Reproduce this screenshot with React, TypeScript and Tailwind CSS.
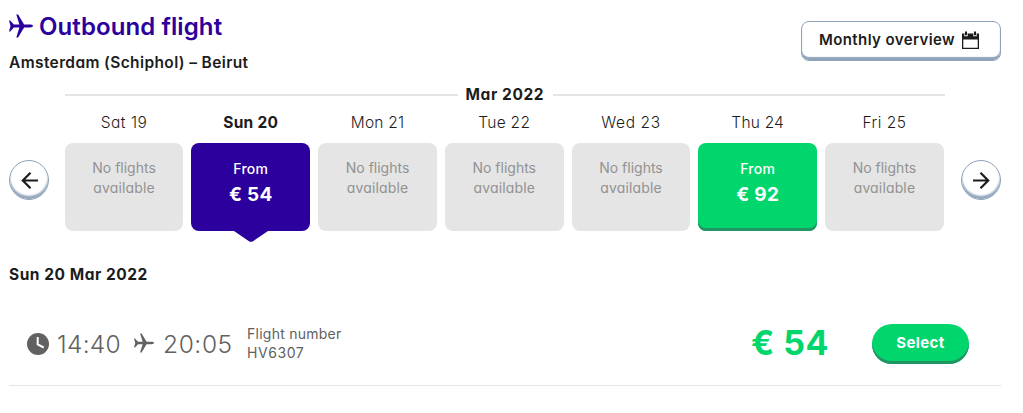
import { clsx } from "clsx";

interface Day {
  label: string;
  price?: number;
  selected?: boolean;
  tracking: string;
}

const days: Day[] = [
  { label: "Sat 19", tracking: "tracking-[0.55px]" },
  { label: "Sun 20", price: 54, selected: true, tracking: "tracking-[0.3px]" },
  { label: "Mon 21", tracking: "tracking-[0.2px]" },
  { label: "Tue 22", tracking: "tracking-[0.3px]" },
  { label: "Wed 23", tracking: "tracking-[0.6px]" },
  { label: "Thu 24", price: 92, tracking: "tracking-[0.2px]" },
  { label: "Fri 25", tracking: "tracking-[0.5px]" },
];

function PlaneIcon({ className }: { className?: string }) {
  return (
    <svg viewBox="0 0 24 24" className={className} fill="currentColor">
      <path d="M0 6.5h1.2l3.6 4 5.6.1L7.3.5h1.8l6 10.1h5.7c1.9 0 3.2.6 3.2 1.4s-1.3 1.4-3.2 1.4h-5.7l-6 10.1H7.3l3.1-10.1-5.6.1-3.6 4H0L1.5 12z" />
    </svg>
  );
}

function CalendarIcon() {
  return (
    <svg viewBox="0 0 17 18" className="h-[18px] w-[17px]" fill="#1c1c1c">
      <path fillRule="evenodd" d="M0 2.5h17V18H0zM1.3 8.5v8.2h14.4V8.5z" />
      <path d="M2.3 2.5h3.4v2.8H2.3zM11.3 2.5h3.4v2.8h-3.4z" fill="#fff" />
      <path d="M3 .5h2v3.8H3zM12 .5h2v3.8h-2z" />
    </svg>
  );
}

function ClockIcon() {
  return (
    <svg viewBox="0 0 22 22" className="mt-[2px] h-[22px] w-[22px]">
      <circle cx="11" cy="11" r="11" fill="#616161" />
      <path d="M10.7 4v7.3l6 3.2" fill="none" stroke="#fff" strokeWidth="2" />
    </svg>
  );
}

function ArrowButton({ direction }: { direction: "left" | "right" }) {
  return (
    <button
      aria-label={direction === "left" ? "Previous days" : "Next days"}
      className="flex h-10 w-10 shrink-0 items-center justify-center rounded-full border border-[#8fa3ba] bg-white shadow-[inset_0_-3px_2px_#8fa3ba]"
    >
      <svg
        viewBox="0 0 17 17"
        className={clsx("h-[17px] w-[17px]", direction === "right" && "rotate-180")}
        fill="none"
        stroke="#1c1c1c"
        strokeWidth="2.2"
      >
        <path d="M9.5.8 1.8 8.5l7.7 7.7M2 8.5h15" />
      </svg>
    </button>
  );
}

function DayCard({ day }: { day: Day }) {
  return (
    <div className="text-center">
      <div
        className={clsx(
          "h-[31px] text-[15.5px] leading-[21px] whitespace-nowrap text-[#1c1c1c]",
          day.selected ? "font-bold" : "font-[350]",
          day.tracking
        )}
      >
        {day.label}
      </div>
      <div
        className={clsx(
          "relative h-[88px] rounded-lg",
          !day.price && "bg-[#e5e5e5] pt-[15px] text-[14px] leading-5 font-normal text-[#929292]",
          day.selected && "bg-[#2b009c] pt-4 text-white",
          day.price && !day.selected && "bg-[#00d66c] pt-4 text-white shadow-[inset_0_-3px_0_#219464]"
        )}
      >
        {day.price ? (
          <>
            <div className="text-[14px] leading-5 font-medium tracking-[0.3px]">From</div>
            <div className="mt-1 text-[19px] leading-6 font-bold tracking-[0.3px]">€ {day.price}</div>
          </>
        ) : (
          <>
            No flights
            <br />
            <span className="tracking-[0.15px]">available</span>
          </>
        )}
        {day.selected && (
          <svg viewBox="0 0 34 12" className="absolute top-[87px] left-1/2 h-3 w-[34px] -translate-x-1/2" fill="#2b009c">
            <path d="M0 0h34v1L19 11.2q-2 1.2-4 0L0 1z" />
          </svg>
        )}
      </div>
    </div>
  );
}

export default function App() {
  return (
    <main className="h-[413px] w-[1023px] overflow-hidden bg-white pr-[22px] pl-[9px] font-['Inter','Lato',sans-serif] text-[#1c1c1c] [font-feature-settings:'cv11']">
      <header className="flex h-[84px] items-start justify-between">
        <div>
          <h1 className="flex h-[52px] items-center gap-[6px] text-[24px] leading-8 font-semibold tracking-[0.1px] text-[#2b009c]">
            <PlaneIcon className="h-6 w-6" />
            <span className="pt-[2px] whitespace-nowrap">Outbound flight</span>
          </h1>
          <p className="text-[15.5px] leading-[22px] font-semibold tracking-[0.38px] whitespace-nowrap">Amsterdam (Schiphol) – Beirut</p>
        </div>
        <button className="mt-[21px] flex h-10 w-[200px] items-center gap-2 rounded-lg border border-[#8fa3ba] bg-white pb-[2px] pl-[17px] text-[15px] font-semibold whitespace-nowrap shadow-[inset_0_-3px_1px_#8fa3ba]">
          <span className="w-[135px] text-left tracking-[0.4px]">Monthly overview</span>
          <CalendarIcon />
        </button>
      </header>

      <section className="flex">
        <div className="pt-[76px]">
          <ArrowButton direction="left" />
        </div>
        <div className="mr-4 ml-4 w-[880px]">
          <div className="flex h-[22px] items-center gap-2">
            <div className="h-[2px] flex-1 bg-[#e5e5e5]" />
            <span className="w-[79px] text-[15.5px] font-bold tracking-[0.6px] whitespace-nowrap">Mar 2022</span>
            <div className="h-[2px] flex-1 bg-[#e5e5e5]" />
          </div>
          <div className="mt-[6px] mr-[1.2px] -ml-[0.3px] grid grid-cols-7 gap-2">
            {days.map((day) => (
              <DayCard key={day.label} day={day} />
            ))}
          </div>
        </div>
        <div className="pt-[76px]">
          <ArrowButton direction="right" />
        </div>
      </section>

      <section className="mt-[33px]">
        <h2 className="text-[15.5px] leading-[22px] font-bold tracking-[0.53px]">Sun 20 Mar 2022</h2>
        <div className="flex h-[100px] items-center border-b border-[#e5e5e5] pt-[15px] pl-[18px] text-[#616161]">
          <ClockIcon />
          <span className="ml-2 w-[77px] pt-px text-[24.5px] leading-8 font-[350] tracking-[0.3px] whitespace-nowrap">14:40</span>
          <PlaneIcon className="h-5 w-5" />
          <span className="ml-[9px] w-[84px] pt-px text-[24.5px] leading-8 font-[350] tracking-[0.6px] whitespace-nowrap">20:05</span>
          <div className="w-[504px] text-[14px] leading-[19px]">
            <span className="tracking-[0.25px]">Flight number</span>
            <br />
            <span className="tracking-[0.6px]">HV6307</span>
          </div>
          <span className="w-[121px] text-[34px] leading-10 font-bold tracking-[0.5px] whitespace-nowrap text-[#00d66c]">€ 54</span>
          <button className="mt-[2px] h-10 w-[97px] rounded-full bg-[#00d66c] pb-[2px] text-[15px] font-bold tracking-[0.4px] text-white shadow-[inset_0_-3px_0_#219464]">
            Select
          </button>
        </div>
      </section>
    </main>
  );
}
